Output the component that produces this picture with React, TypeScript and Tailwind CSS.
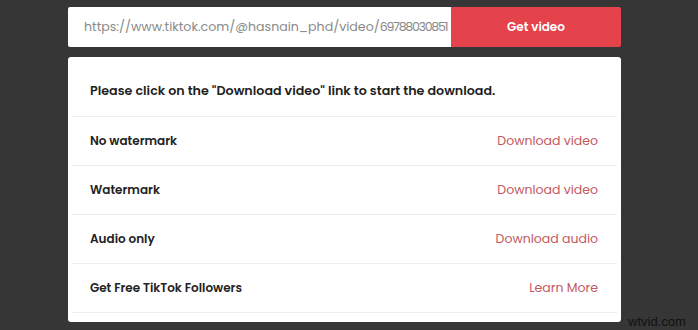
import React from "react";

const rows = [
  { label: "No watermark", link: "Download video" },
  { label: "Watermark", link: "Download video" },
  { label: "Audio only", link: "Download audio" },
  { label: "Get Free TikTok Followers", link: "Learn More" },
];

export default function App() {
  return (
    <div
      className="w-[698px] h-[330px] bg-[#363636] relative overflow-hidden"
      style={{ fontFamily: "Poppins, Inter, 'Noto Sans', sans-serif" }}
    >
      <div className="ml-[68px] w-[553px] pt-[7px]">
        <div className="flex h-[40px]">
          <div className="flex-1 min-w-0 bg-white flex items-center pl-[16px] text-[12.6px] text-[#8a8a8a] overflow-hidden whitespace-nowrap rounded-l-[2px]">
            <span>https://www.tiktok.com/@hasnain_phd/video/</span>
            <span className="tracking-[-1.3px]">69788030851</span>
          </div>
          <div className="w-[170px] bg-[#e5434b] flex items-center justify-center text-white text-[12px] font-semibold rounded-r-[2px]">
            Get video
          </div>
        </div>
        <div className="mt-[10px] bg-white rounded-[3px] px-[4px] h-[265px]">
          <div className="pt-[24px] pb-[15px] pl-[18px] text-[12.7px] leading-[20px] font-semibold text-[#1f1f1f] border-b border-[#ececec]">
            Please click on the "Download video" link to start the download.
          </div>
          {rows.map((r) => (
            <div
              key={r.label}
              className="h-[49px] flex items-center justify-between pl-[18px] pr-[19px] border-b border-[#ececec]"
            >
              <span className="text-[12px] font-semibold text-[#222]">{r.label}</span>
              <span className="text-[12.5px] text-[#c25862]">{r.link}</span>
            </div>
          ))}
        </div>
      </div>
      <div
        className="absolute left-[628px] top-[312px] text-[13px] text-[#111]"
        style={{ fontFamily: "'Liberation Sans', Arial, sans-serif" }}
      >
        wtvid.com
      </div>
    </div>
  );
}
